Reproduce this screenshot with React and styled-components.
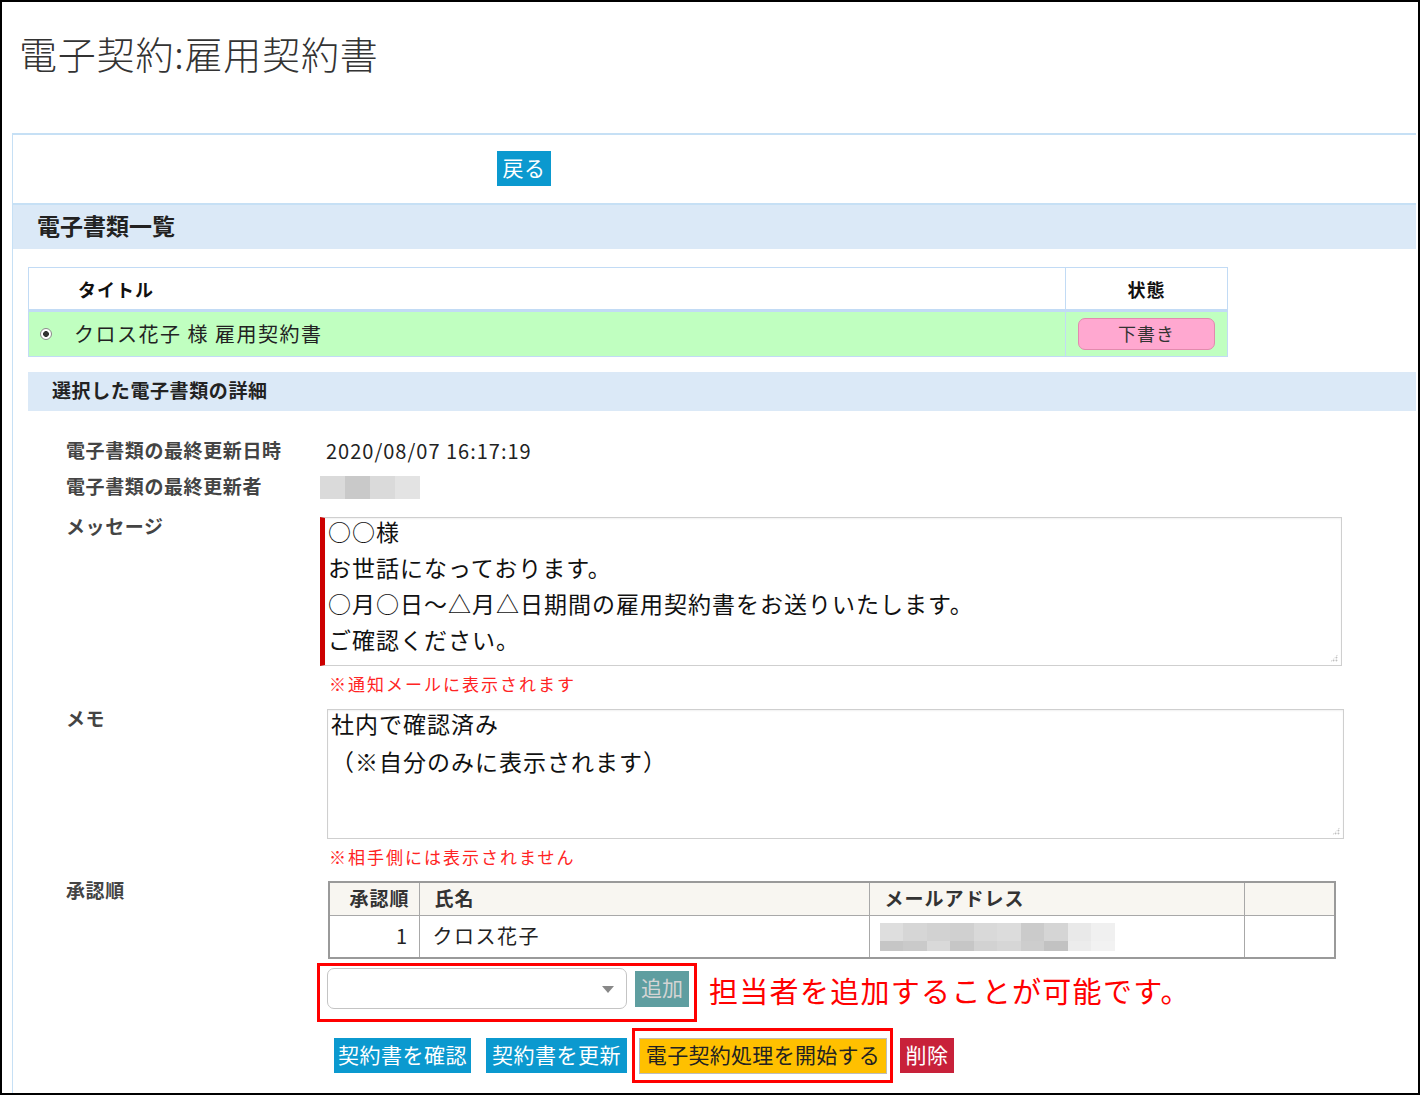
import styled, { createGlobalStyle } from 'styled-components';

const GlobalStyle = createGlobalStyle`
  html, body {
    margin: 0;
    padding: 0;
    background: #fff;
  }
  body {
    font-family: "Noto Sans CJK JP", "Noto Sans", sans-serif;
    color: #222;
  }
`;

const FONT = `"Noto Sans CJK JP", "Noto Sans", sans-serif`;

// ぼかし（モザイク）の色
const updaterShades = ['#dadada', '#c9c9c9', '#dadada', '#e3e3e3'];
const mailShadesTop = ['#dedede', '#d6d6d6', '#d2d2d2', '#d0d0d0', '#d9d9d9', '#dcdcdc', '#cbcbcb', '#d5d5d5', '#e9e9e9', '#f0f0f0'];
const mailShadesBottom = ['#c6c6c6', '#cacaca', '#d9d9d9', '#c6c6c6', '#d2d2d2', '#d6d6d6', '#cdcdcd', '#c2c2c2', '#ececec', '#f2f2f2'];

const approvers = [{ order: 1, name: 'クロス花子' }];

const messageLines = [
  '○○様',
  'お世話になっております。',
  '○月○日～△月△日期間の雇用契約書をお送りいたします。',
  'ご確認ください。',
];
const memoLines = ['社内で確認済み', '（※自分のみに表示されます）'];

function Mosaic({ shades, cellWidth, height }) {
  return (
    <MosaicRow>
      {shades.map((s, i) => (
        <MosaicCell key={i} $shade={s} $w={cellWidth} $h={height} />
      ))}
    </MosaicRow>
  );
}

function TextArea({ lines, lineGap, ...rest }) {
  return (
    <TextBox role="textbox" aria-readonly="true" {...rest}>
      {lines.map((l, i) => (
        <TextLine key={i} $gap={lineGap}>
          {l}
        </TextLine>
      ))}
    </TextBox>
  );
}

export default function App() {
  return (
    <>
      <GlobalStyle />
      <Page>
        <Title>電子契約:雇用契約書</Title>
        <Panel>
          <TopBar>
            <Button $tone="blue" $w={54}>戻る</Button>
          </TopBar>
          <SectionHead>電子書類一覧</SectionHead>

          <DocTable>
            <thead>
              <tr>
                <DocTh $align="left">タイトル</DocTh>
                <DocTh $align="center">状態</DocTh>
              </tr>
            </thead>
            <tbody>
              <DocRow>
                <DocTd>
                  <Radio />
                  <DocTitle>クロス花子 様 雇用契約書</DocTitle>
                </DocTd>
                <DocTd $center>
                  <Badge>下書き</Badge>
                </DocTd>
              </DocRow>
            </tbody>
          </DocTable>

          <SubHead>選択した電子書類の詳細</SubHead>

          <Details>
            <Row $gap={24}>
              <Label $lh={36}>電子書類の最終更新日時</Label>
              <Value>
                <DateText>2020/08/07 16:17:19</DateText>
              </Value>
            </Row>
            <Row $gap={0}>
              <Label $lh={36}>電子書類の最終更新者</Label>
              <Value>
                <MosaicSlot>
                  <Mosaic shades={updaterShades} cellWidth={25} height={23} />
                </MosaicSlot>
              </Value>
            </Row>
            <Row $gap={10}>
              <Label $lh={24}>メッセージ</Label>
              <Value>
                <TextArea lines={messageLines} lineGap={10} $w={1022} $h={149} $marked />
                <Note>※通知メールに表示されます</Note>
              </Value>
            </Row>
            <Row $gap={11}>
              <Label $lh={24}>メモ</Label>
              <Value>
                <TextArea lines={memoLines} lineGap={12} $w={1017} $h={130} $indent={7} />
                <Note>※相手側には表示されません</Note>
              </Value>
            </Row>
            <Row $gap={10}>
              <Label $lh={24}>承認順</Label>
              <Value>
                <ApprovalTable>
                  <colgroup>
                    <col style={{ width: 90 }} />
                    <col style={{ width: 450 }} />
                    <col style={{ width: 375 }} />
                    <col style={{ width: 91 }} />
                  </colgroup>
                  <thead>
                    <tr>
                      <ApTh $right>承認順</ApTh>
                      <ApTh>氏名</ApTh>
                      <ApTh>メールアドレス</ApTh>
                      <ApTh />
                    </tr>
                  </thead>
                  <tbody>
                    {approvers.map((a) => (
                      <tr key={a.order}>
                        <ApTd $right>{a.order}</ApTd>
                        <ApTd>{a.name}</ApTd>
                        <ApTd>
                          <MailMosaic>
                            <Mosaic shades={mailShadesTop} cellWidth={23.5} height={18} />
                            <Mosaic shades={mailShadesBottom} cellWidth={23.5} height={10} />
                          </MailMosaic>
                        </ApTd>
                        <ApTd />
                      </tr>
                    ))}
                  </tbody>
                </ApprovalTable>

                <AddRow>
                  <Callout $pad="2px 5px 10px 7px">
                    <SelectBox />
                    <AddButton>追加</AddButton>
                  </Callout>
                  <Hint>担当者を追加することが可能です。</Hint>
                </AddRow>

                <ActionRow>
                  <Button $tone="blue" $w={137}>契約書を確認</Button>
                  <Button $tone="blue" $w={141}>契約書を更新</Button>
                  <Callout $pad="7px 3px 6px 4px">
                    <StartButton>電子契約処理を開始する</StartButton>
                  </Callout>
                  <Button $tone="red" $w={54}>削除</Button>
                </ActionRow>
              </Value>
            </Row>
          </Details>
        </Panel>
      </Page>
    </>
  );
}

const Page = styled.div`
  box-sizing: border-box;
  width: 1420px;
  height: 1095px;
  border: 2px solid #000;
  display: flex;
  flex-direction: column;
  overflow: hidden;
  background: #fff;
`;

const Title = styled.h1`
  margin: 24px 0 53px 17px;
  font-family: ${FONT};
  font-size: 38px;
  line-height: 54px;
  font-weight: 300;
  letter-spacing: 0.8px;
  color: #333;
`;

const Panel = styled.section`
  flex: 1;
  margin: 0 2px 0 10px;
  border-top: 2px solid #c6e0f5;
  border-left: 1px solid #c6e0f5;
`;

const TopBar = styled.div`
  box-sizing: border-box;
  height: 70px;
  padding: 16px 0 0 484px;
  border-bottom: 2px solid #c6e0f5;
`;

const toneColors = {
  blue: { bg: '#0b99cf', fg: '#fff' },
  red: { bg: '#c8213a', fg: '#fff' },
};

const Button = styled.button`
  width: ${(p) => p.$w}px;
  height: 35px;
  padding: 0 0 3px;
  border: none;
  background: ${(p) => toneColors[p.$tone].bg};
  color: ${(p) => toneColors[p.$tone].fg};
  font-family: ${FONT};
  font-size: 21px;
  line-height: 32px;
  letter-spacing: 0.5px;
  white-space: nowrap;
  cursor: pointer;
`;

const SectionHead = styled.h2`
  margin: 0;
  box-sizing: border-box;
  height: 44px;
  padding: 0 0 4px 24px;
  background: #dbe9f7;
  font-size: 23px;
  line-height: 40px;
  font-weight: 700;
  color: #222;
`;

const DocTable = styled.table`
  margin: 18px 0 0 15px;
  width: 1200px;
  border-collapse: collapse;
  table-layout: fixed;
`;

const DocTh = styled.th`
  height: 41px;
  padding: 0;
  padding-left: ${(p) => (p.$align === 'left' ? '49px' : '0')};
  width: ${(p) => (p.$align === 'left' ? 'auto' : '161px')};
  text-align: ${(p) => p.$align};
  font-size: 18px;
  font-weight: 700;
  letter-spacing: 1px;
  color: #111;
  border: 1px solid #c2dbf5;
  border-bottom: 3px solid #c2dbf5;
  background: #fff;
`;

const DocRow = styled.tr`
  background: #c0ffc0;
`;

const DocTd = styled.td`
  height: 44px;
  padding: 0 0 0 11px;
  border: 1px solid #c2dbf5;
  text-align: ${(p) => (p.$center ? 'center' : 'left')};
  ${(p) => p.$center && 'padding: 0;'}
  vertical-align: middle;
`;

const Radio = styled.span`
  display: inline-block;
  vertical-align: middle;
  box-sizing: border-box;
  width: 12px;
  height: 12px;
  border-radius: 50%;
  border: 1px solid #8a8a8a;
  background: radial-gradient(circle, #333 0 2.6px, #fff 3.2px);
  margin-right: 22px;
`;

const DocTitle = styled.span`
  vertical-align: middle;
  font-size: 20px;
  letter-spacing: 1.5px;
  color: #222;
`;

const Badge = styled.span`
  display: inline-block;
  box-sizing: border-box;
  width: 137px;
  height: 32px;
  line-height: 28px;
  border: 1px solid #e28aae;
  border-radius: 7px;
  background: #ffa8d0;
  font-size: 18px;
  color: #333;
  letter-spacing: 1px;
`;

const SubHead = styled.h3`
  margin: 15px 0 0 15px;
  box-sizing: border-box;
  height: 39px;
  padding: 0 0 4px 24px;
  background: #dbe9f7;
  font-size: 19px;
  line-height: 35px;
  font-weight: 700;
  letter-spacing: 0.6px;
  color: #222;
`;

const Details = styled.div`
  margin-left: 15px;
`;

const Row = styled.div`
  display: flex;
  align-items: flex-start;
  margin-top: ${(p) => p.$gap}px;
`;

const Label = styled.div`
  flex-shrink: 0;
  box-sizing: border-box;
  width: 292px;
  margin-top: -3px;
  padding-left: 38px;
  font-size: 19px;
  font-weight: 700;
  letter-spacing: 0.6px;
  line-height: ${(p) => p.$lh}px;
  color: #444;
`;

const Value = styled.div`
  display: flex;
  flex-direction: column;
  align-items: flex-start;
`;

const DateText = styled.div`
  margin: -2px 0 2px 6px;
  font-size: 20px;
  line-height: 36px;
  letter-spacing: 1px;
  color: #222;
`;

const MosaicSlot = styled.div`
  height: 36px;
  padding-top: 5px;
  box-sizing: border-box;
`;

const MosaicRow = styled.div`
  display: flex;
`;

const MosaicCell = styled.span`
  display: block;
  width: ${(p) => p.$w}px;
  height: ${(p) => p.$h}px;
  background: ${(p) => p.$shade};
`;

const TextBox = styled.div`
  position: relative;
  box-sizing: border-box;
  width: ${(p) => p.$w}px;
  height: ${(p) => p.$h}px;
  margin-left: ${(p) => p.$indent || 0}px;
  padding: 0 3px;
  border: 1px solid #cfcfcf;
  border-left: ${(p) => (p.$marked ? '5px solid #cc0000' : '1px solid #cfcfcf')};
  box-shadow: inset 0 1px 2px rgba(0, 0, 0, 0.06);
  background: #fff;
  font-family: ${FONT};
  font-size: 23px;
  letter-spacing: 1px;
  color: #111;
  white-space: pre;

  /* リサイズつまみ */
  &::after {
    content: '';
    position: absolute;
    right: 3px;
    bottom: 3px;
    width: 8px;
    height: 8px;
    background-image: radial-gradient(circle, #9a9a9a 0 0.7px, transparent 0.9px);
    background-size: 2.5px 2.5px;
    clip-path: polygon(100% 0, 100% 100%, 0 100%);
  }
`;

const TextLine = styled.div`
  line-height: 26px;
  margin-bottom: ${(p) => p.$gap}px;
`;

const Note = styled.div`
  margin-top: 6px;
  padding: 0 0 2px 9px;
  font-size: 17px;
  line-height: 24px;
  letter-spacing: 2px;
  color: #ff2424;
`;

const ApprovalTable = styled.table`
  margin-left: 8px;
  width: 1006px;
  border-collapse: collapse;
  table-layout: fixed;
  border: 2px solid #9a9a9a;
`;

const ApTh = styled.th`
  box-sizing: border-box;
  height: 33px;
  padding: 0 ${(p) => (p.$right ? '9px' : '0')} 2px ${(p) => (p.$right ? '0' : '15px')};
  text-align: ${(p) => (p.$right ? 'right' : 'left')};
  background: #f8f6f1;
  border: 1px solid #a8a8a8;
  font-size: 19px;
  font-weight: 700;
  letter-spacing: 1px;
  color: #333;
`;

const ApTd = styled.td`
  box-sizing: border-box;
  height: 43px;
  padding: 0 ${(p) => (p.$right ? '10px' : '0')} 2px ${(p) => (p.$right ? '0' : '13px')};
  text-align: ${(p) => (p.$right ? 'right' : 'left')};
  border: 1px solid #a8a8a8;
  font-size: 20px;
  letter-spacing: 1.5px;
  color: #222;
`;

const MailMosaic = styled.div`
  display: flex;
  flex-direction: column;
  margin-left: -3px;
  margin-top: 4px;
`;

const AddRow = styled.div`
  display: flex;
  align-items: center;
  margin: 4px 0 0 -3px;
`;

const Callout = styled.div`
  display: flex;
  align-items: flex-start;
  gap: 8px;
  padding: ${(p) => p.$pad};
  border: 3px solid #ff0000;
`;

const SelectBox = styled.div`
  position: relative;
  box-sizing: border-box;
  width: 300px;
  height: 41px;
  border: 1px solid #c4c4c4;
  border-radius: 7px;
  background: #fff;

  &::after {
    content: '';
    position: absolute;
    right: 12px;
    top: 17px;
    border-left: 6px solid transparent;
    border-right: 6px solid transparent;
    border-top: 7px solid #888;
  }
`;

const AddButton = styled.button`
  margin-top: 3px;
  width: 54px;
  height: 36px;
  padding: 0 0 3px;
  border: none;
  background: #5f9ea0;
  color: #d4d4d4;
  font-family: ${FONT};
  font-size: 21px;
  line-height: 33px;
`;

const Hint = styled.div`
  margin-left: 12px;
  padding-bottom: 5px;
  font-size: 29px;
  line-height: 40px;
  color: #ff0000;
  letter-spacing: 1.3px;
`;

const ActionRow = styled.div`
  display: flex;
  align-items: center;
  margin: 6px 0 0 14px;

  & > :nth-child(2) {
    margin-left: 15px;
  }
  & > :nth-child(3) {
    margin-left: 5px;
  }
  & > :nth-child(4) {
    margin-left: 7px;
  }
`;

const StartButton = styled.button`
  box-sizing: border-box;
  width: 248px;
  height: 36px;
  padding: 0 0 3px;
  border: 1px solid #bdbdbd;
  background: #ffc000;
  color: #222;
  font-family: ${FONT};
  font-size: 21px;
  line-height: 31px;
  letter-spacing: 0.3px;
  white-space: nowrap;
`;
